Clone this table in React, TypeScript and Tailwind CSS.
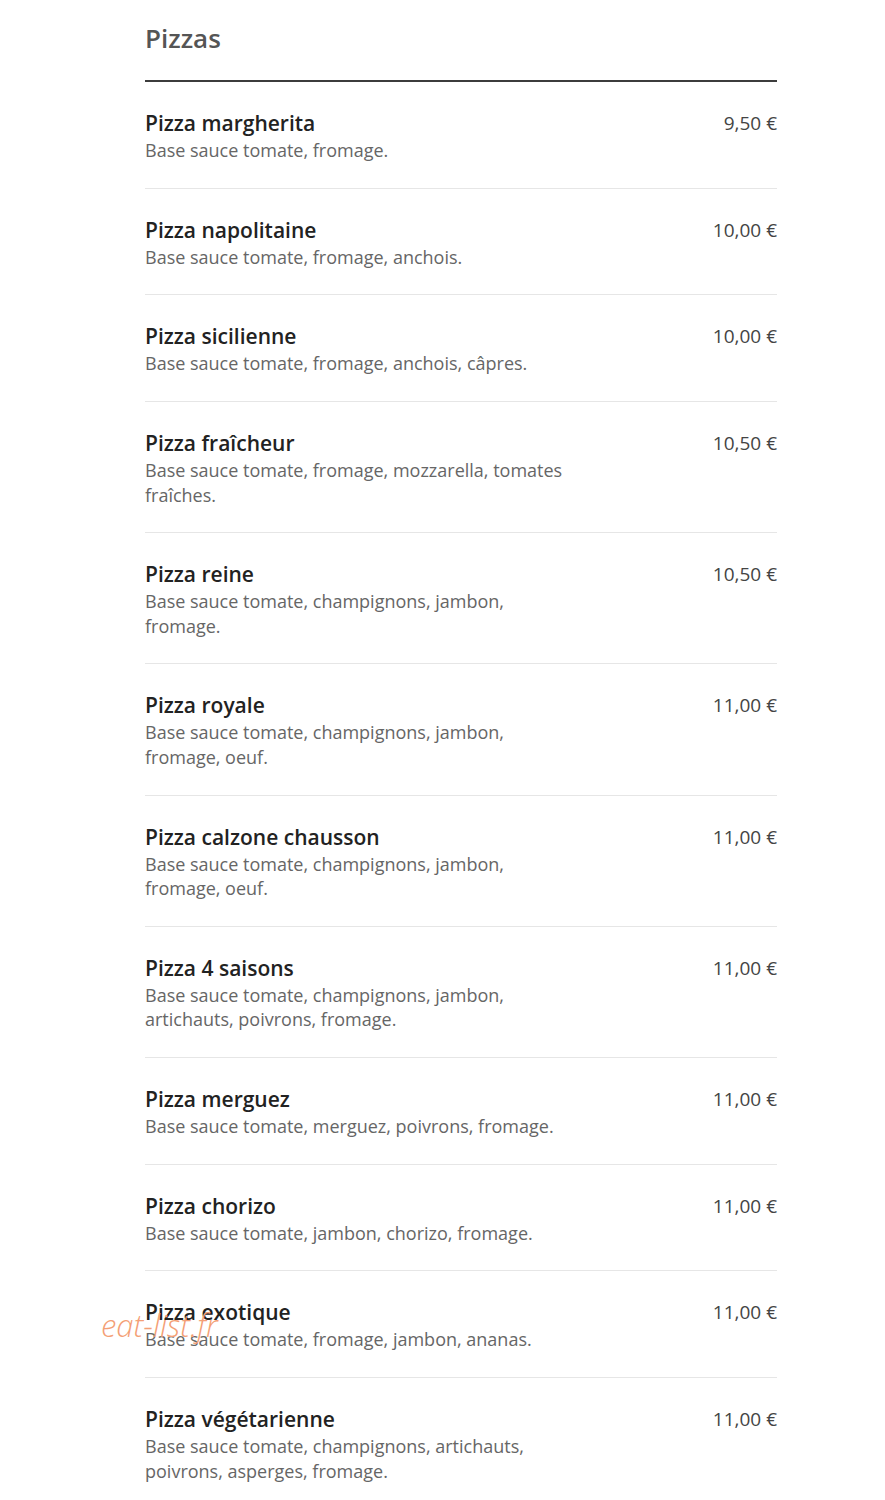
import React from 'react';

type Pizza = { name: string; desc: string; price: string };

const pizzas: Pizza[] = [
  { name: 'Pizza margherita', desc: 'Base sauce tomate, fromage.', price: '9,50 €' },
  { name: 'Pizza napolitaine', desc: 'Base sauce tomate, fromage, anchois.', price: '10,00 €' },
  { name: 'Pizza sicilienne', desc: 'Base sauce tomate, fromage, anchois, câpres.', price: '10,00 €' },
  { name: 'Pizza fraîcheur', desc: 'Base sauce tomate, fromage, mozzarella, tomates fraîches.', price: '10,50 €' },
  { name: 'Pizza reine', desc: 'Base sauce tomate, champignons, jambon, fromage.', price: '10,50 €' },
  { name: 'Pizza royale', desc: 'Base sauce tomate, champignons, jambon, fromage, oeuf.', price: '11,00 €' },
  { name: 'Pizza calzone chausson', desc: 'Base sauce tomate, champignons, jambon, fromage, oeuf.', price: '11,00 €' },
  { name: 'Pizza 4 saisons', desc: 'Base sauce tomate, champignons, jambon, artichauts, poivrons, fromage.', price: '11,00 €' },
  { name: 'Pizza merguez', desc: 'Base sauce tomate, merguez, poivrons, fromage.', price: '11,00 €' },
  { name: 'Pizza chorizo', desc: 'Base sauce tomate, jambon, chorizo, fromage.', price: '11,00 €' },
  { name: 'Pizza exotique', desc: 'Base sauce tomate, fromage, jambon, ananas.', price: '11,00 €' },
  { name: 'Pizza végétarienne', desc: 'Base sauce tomate, champignons, artichauts, poivrons, asperges, fromage.', price: '11,00 €' },
];

const App: React.FC = () => {
  return (
    <div className="min-h-screen bg-white font-['Open_Sans',sans-serif]">
      <div className="relative w-[632px] ml-[145px] pt-[22px]">
        <h2 className="text-[26px] leading-[32px] font-semibold text-[#555555] mb-[26px]">Pizzas</h2>
        <div className="h-[2px] bg-[#3c3c3c]" />

        {pizzas.map((p, i) => (
          <div
            key={p.name}
            className={`flex justify-between pt-[26px] pb-[25.2px] ${i < pizzas.length - 1 ? 'border-b border-[#e6e6e6]' : ''}`}
          >
            <div className="w-[432px]">
              <div className="text-[21px] leading-[30px] font-semibold text-[#222222]">{p.name}</div>
              <div className="text-[18px] leading-[24.5px] text-[#666666]">{p.desc}</div>
            </div>
            <div className="text-[19px] leading-[30px] text-[#444444]">{p.price}</div>
          </div>
        ))}

        {/* watermark */}
        <div className="absolute left-[-44px] top-[1302px] text-[31px] italic font-light text-[#f49f76] pointer-events-none">
          eat-list.fr
        </div>
      </div>
    </div>
  );
};

export default App;
